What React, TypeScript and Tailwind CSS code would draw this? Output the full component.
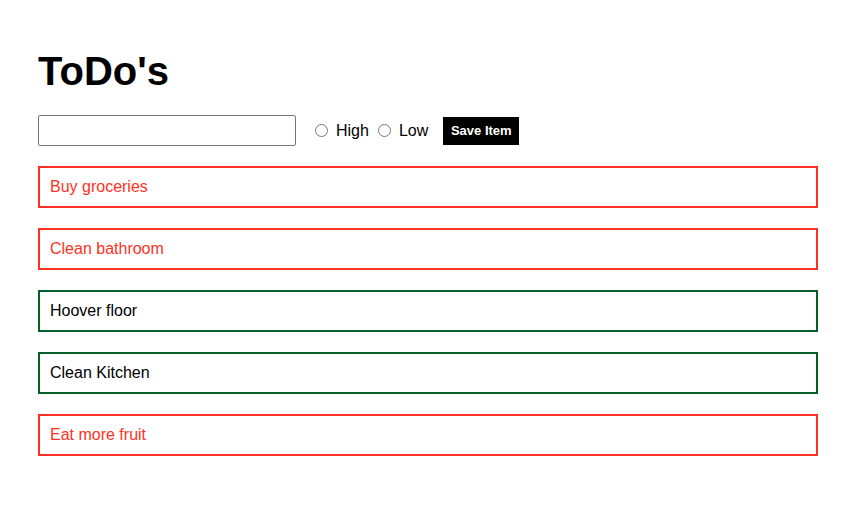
import React, { useState } from 'react';

type Todo = { text: string; priority: 'high' | 'low' };

const initialTodos: Todo[] = [
  { text: 'Buy groceries', priority: 'high' },
  { text: 'Clean bathroom', priority: 'high' },
  { text: 'Hoover floor', priority: 'low' },
  { text: 'Clean Kitchen', priority: 'low' },
  { text: 'Eat more fruit', priority: 'high' },
];

const App = () => {
  const [todos] = useState<Todo[]>(initialTodos);

  return (
    <div className="min-h-screen bg-white px-[38px] pt-[48px] text-black font-['Liberation_Sans',Arial,sans-serif]">
      {/* Title */}
      <h1 className="text-[40px] font-bold leading-[46px]">ToDo's</h1>

      {/* Form row */}
      <div className="mt-[21px] flex items-center h-[31px]">
        <input
          type="text"
          className="w-[258px] h-[31px] border border-[#767676] rounded-[2px] px-2 text-base outline-none"
        />
        <label className="ml-[19px] flex items-center text-base">
          <input type="radio" name="priority" className="m-0 w-[13px] h-[13px]" />
          <span className="ml-2">High</span>
        </label>
        <label className="ml-[9px] flex items-center text-base">
          <input type="radio" name="priority" className="m-0 w-[13px] h-[13px]" />
          <span className="ml-2">Low</span>
        </label>
        <button className="ml-[15px] h-[28px] w-[76px] bg-black text-white text-[13px] font-bold">
          Save Item
        </button>
      </div>

      {/* List */}
      <ul className="mt-[20px] flex flex-col gap-[20px] w-[780px]">
        {todos.map((todo) => (
          <li
            key={todo.text}
            className={
              todo.priority === 'high'
                ? 'border-2 border-[#ff3124] text-[#ff3124] px-[10px] py-[10px] text-base leading-[18px]'
                : 'border-2 border-[#07602b] text-black px-[10px] py-[10px] text-base leading-[18px]'
            }
          >
            {todo.text}
          </li>
        ))}
      </ul>
    </div>
  );
};

export default App;
